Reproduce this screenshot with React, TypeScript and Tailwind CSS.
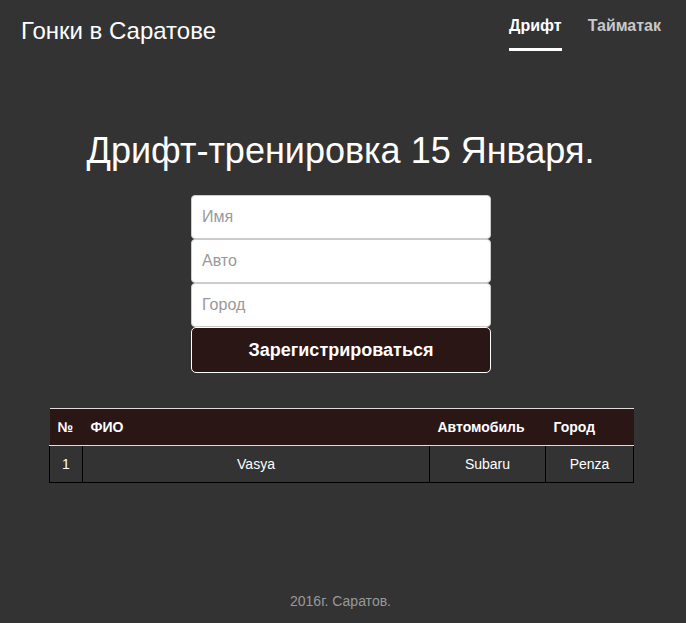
const rows = [{ n: 1, name: "Vasya", car: "Subaru", city: "Penza" }];

const App = () => {
  return (
    <div className="min-h-[623px] bg-[#333333] flex flex-col font-['Liberation_Sans',Arial,sans-serif] text-white">
      <header className="flex justify-between items-start pl-[21px] pr-[25px]">
        <div className="pt-[17px] text-[24px] leading-[28px]">Гонки в Саратове</div>
        <nav className="flex gap-[26px] pt-[16px] text-[16px] leading-[20px] font-bold">
          <a className="pb-[12px] border-b-[3px] border-white text-white">Дрифт</a>
          <a className="text-[#c8c8c8]">Тайматак</a>
        </nav>
      </header>

      <main className="flex flex-col">
        <h1 className="mt-[80px] pr-[5px] text-center text-[36px] leading-[40px]">
          Дрифт-тренировка 15 Января.
        </h1>

        <form className="mt-[24px] w-[300px] ml-[191px] flex flex-col">
          {["Имя", "Авто", "Город"].map((p) => (
            <input
              key={p}
              placeholder={p}
              className="h-[44px] px-[10px] bg-white text-[16px] text-[#333] placeholder:text-[#999] border border-[#ccc] rounded-[4px] outline-none"
            />
          ))}
          <button
            type="button"
            className="h-[46px] bg-[#2b1616] border border-white rounded-[5px] text-[18px] font-bold text-white"
          >
            Зарегистрироваться
          </button>
        </form>

        <table className="mt-[35px] ml-[49px] w-[584px] table-fixed border-collapse text-[14px] leading-[20px]">
          <colgroup>
            <col className="w-[33px]" />
            <col className="w-[347px]" />
            <col className="w-[116px]" />
            <col className="w-[88px]" />
          </colgroup>
          <thead>
            <tr className="bg-[#2b1616]">
              {["№", "ФИО", "Автомобиль", "Город"].map((h) => (
                <th
                  key={h}
                  className="px-[8px] py-[8px] text-left font-bold border-t border-b border-[#ddd]"
                >
                  {h}
                </th>
              ))}
            </tr>
          </thead>
          <tbody>
            {rows.map((r) => (
              <tr key={r.n}>
                <td className="py-[8px] text-center border border-black">{r.n}</td>
                <td className="py-[8px] text-center border border-black">{r.name}</td>
                <td className="py-[8px] text-center border border-black">{r.car}</td>
                <td className="py-[8px] text-center border border-black">{r.city}</td>
              </tr>
            ))}
          </tbody>
        </table>
      </main>

      <footer className="mt-auto pb-[12px] pr-[5px] text-center text-[14px] leading-[20px] text-[#999]">
        2016г. Саратов.
      </footer>
    </div>
  );
};

export default App;
